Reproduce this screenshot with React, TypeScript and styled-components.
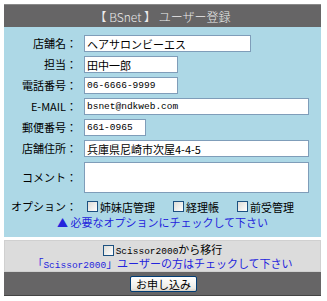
import styled, { createGlobalStyle } from "styled-components"

const Global = createGlobalStyle`
    body{
        margin: 0;
        background: #fff;
        font-family: "Noto Sans CJK JP", sans-serif;
        font-size: 11px;
        color: #000;
    }
`

interface iField{
    label: string;
    value?: string;
    width: number;
    mono?: boolean;
    area?: boolean;
}

const fields: iField[] = [
    {label: "店舗名：", value: "ヘアサロンビーエス", width: 167},
    {label: "担当：", value: "田中一郎", width: 94},
    {label: "電話番号：", value: "06-6666-9999", width: 94, mono: true},
    {label: "E-MAIL：", value: "bsnet@ndkweb.com", width: 225, mono: true},
    {label: "郵便番号：", value: "661-0965", width: 62, mono: true},
    {label: "店舗住所：", value: "兵庫県尼崎市次屋4-4-5", width: 225},
    {label: "コメント：", width: 225, area: true},
]

const options = ["姉妹店管理", "経理帳", "前受管理"]

export default function App(){
    return(
        <Page>
            <Global/>
            <Header>【 BSnet 】 ユーザー登録</Header>
            <FormPanel>
                <Grid>
                    {fields.map((f) => (
                        <Row key={f.label} $area={f.area}>
                            <Label>{f.label}</Label>
                            {f.area
                                ? <Area $w={f.width}/>
                                : <Field $w={f.width} $mono={f.mono} defaultValue={f.value}/>}
                        </Row>
                    ))}
                    <Row $opt>
                        <Label>オプション：</Label>
                        <Options>
                            {options.map((o) => (
                                <Check key={o}>
                                    <Box type="checkbox"/>
                                    {o}
                                </Check>
                            ))}
                        </Options>
                    </Row>
                </Grid>
                <Note>▲ 必要なオプションにチェックして下さい</Note>
            </FormPanel>
            <GrayPanel>
                <Check>
                    <Box type="checkbox"/>
                    <span><Mono>Scissor2000</Mono>から移行</span>
                </Check>
                <Note $flush>「<Mono>Scissor2000</Mono>」ユーザーの方はチェックして下さい</Note>
            </GrayPanel>
            <Footer>
                <Submit type="button">お申し込み</Submit>
            </Footer>
        </Page>
    )
}

const Page = styled.div`
    width: 317px;
    padding: 4px;
`
const Header = styled.div`
    height: 23px;
    background: #666566;
    border-top: 1px solid #8a8a8a;
    box-sizing: border-box;
    color: #ececec;
    font-size: 12px;
    font-weight: 300;
    display: flex;
    align-items: center;
    justify-content: center;
    padding-top: 1px;
`
const FormPanel = styled.div`
    height: 210px;
    box-sizing: border-box;
    background: #add8e6;
    padding-top: 8px;
`
const Grid = styled.div`
    display: flex;
    flex-direction: column;
    gap: 4px;
`
const Row = styled.div<{$area?: boolean; $opt?: boolean}>`
    display: grid;
    grid-template-columns: 73px auto;
    column-gap: 7px;
    align-items: center;
    height: ${p => p.$area ? "31px" : p.$opt ? "13px" : "17px"};
    margin-top: ${p => p.$area ? "1px" : p.$opt ? "1px" : "0"};
`
const Label = styled.div`
    text-align: right;
    line-height: 17px;
    white-space: nowrap;
`
const Field = styled.input<{$w: number; $mono?: boolean}>`
    width: ${p => p.$w}px;
    height: 17px;
    box-sizing: border-box;
    border: 1px solid #7f9db9;
    background: #fff;
    padding: 0 2px;
    margin: 0;
    font-family: ${p => p.$mono ? `"Liberation Mono", "Noto Sans CJK JP", monospace` : `"Noto Sans CJK JP", sans-serif`};
    font-size: ${p => p.$mono ? "9.5px" : "11px"};
    color: #000;
    outline: none;
`
const Area = styled.textarea<{$w: number}>`
    width: ${p => p.$w}px;
    height: 31px;
    box-sizing: border-box;
    border: 1px solid #7f9db9;
    background: #fff;
    margin: 0;
    padding: 0;
    resize: none;
    display: block;
`
const Options = styled.div`
    display: flex;
    gap: 18px;
    padding-left: 3px;
`
const Check = styled.label`
    display: flex;
    align-items: center;
    gap: 2px;
    height: 14px;
    line-height: 14px;
    white-space: nowrap;
`
const Box = styled.input`
    appearance: none;
    width: 11px;
    height: 11px;
    margin: 0;
    border: 1px solid #1c5180;
    background: linear-gradient(135deg, #dcdcd7, #fff);
`
const Mono = styled.span`
    font-family: "Liberation Mono", monospace;
    font-size: 9.5px;
`
const Note = styled.div<{$flush?: boolean}>`
    color: #2424dc;
    text-align: center;
    height: 13px;
    line-height: 13px;
    margin-top: ${p => p.$flush ? "0" : "5px"};
    white-space: nowrap;
`
const GrayPanel = styled.div`
    margin-top: 3px;
    height: 32px;
    box-sizing: border-box;
    background: #dcdcdc;
    border: 1px solid #d0d0d0;
    display: flex;
    flex-direction: column;
    align-items: center;
    padding-top: 2px;
    overflow: hidden;
`
const Footer = styled.div`
    height: 24px;
    background: #666566;
    border-bottom: 1px solid #444;
    box-sizing: border-box;
    display: flex;
    align-items: center;
    justify-content: center;
    padding-left: 2px;
`
const Submit = styled.button`
    width: 67px;
    height: 16px;
    padding: 0;
    border: 1px solid #003c74;
    border-radius: 2px;
    background: linear-gradient(#fff, #ecebe6 80%, #d6d0c5);
    font-family: "Noto Sans CJK JP", sans-serif;
    font-size: 11px;
    line-height: 14px;
    color: #000;
`
